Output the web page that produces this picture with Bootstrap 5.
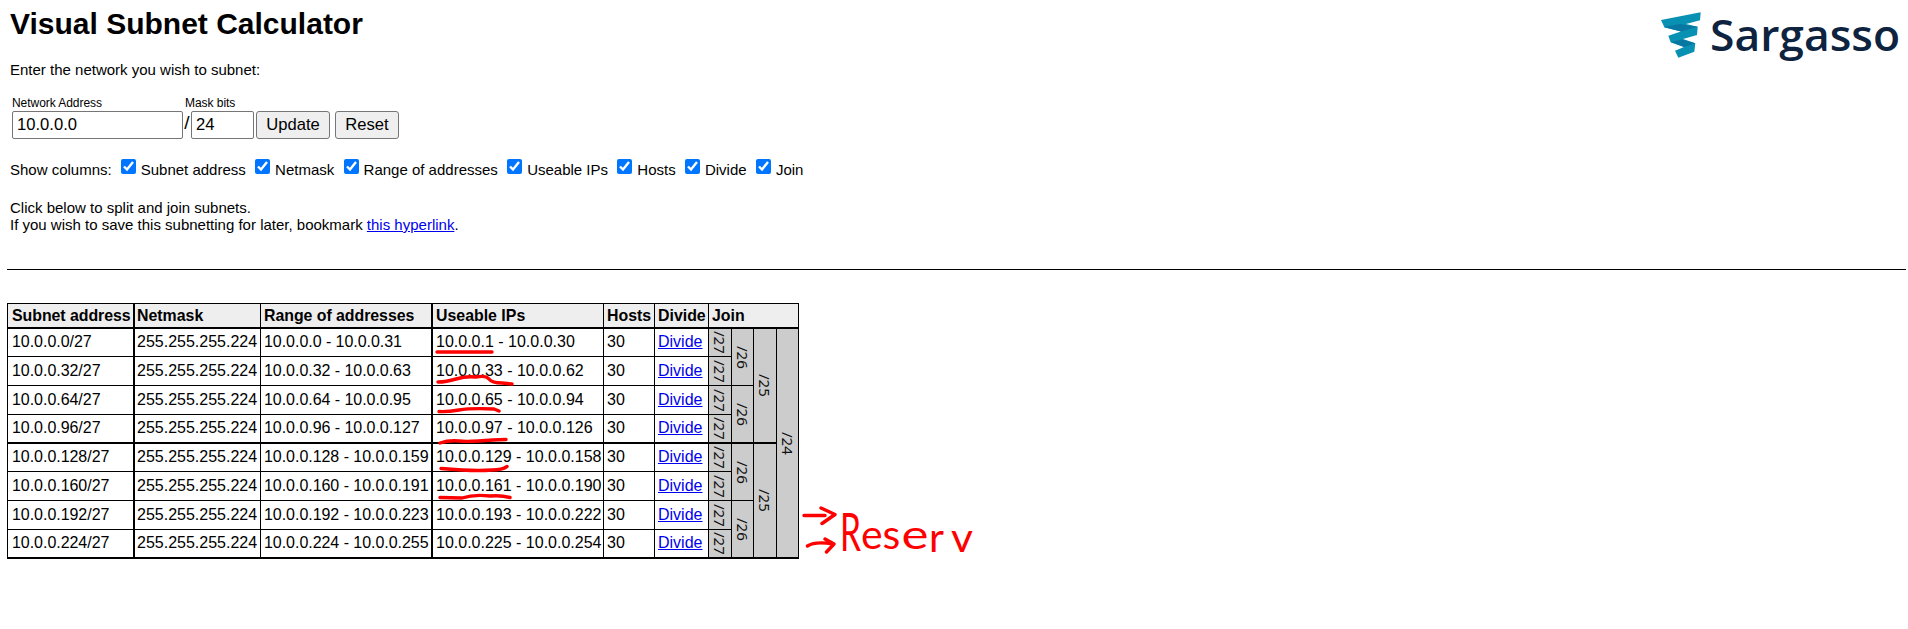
<!DOCTYPE html>
<html lang="en">
<head>
<meta charset="utf-8">
<title>Visual Subnet Calculator</title>
<link href="https://cdn.jsdelivr.net/npm/bootstrap@5.3.0/dist/css/bootstrap.min.css" rel="stylesheet">
<script src="https://cdn.jsdelivr.net/npm/bootstrap@5.3.0/dist/js/bootstrap.bundle.min.js"></script>
<style>
body{font-family:"Liberation Sans",Arial,sans-serif;font-size:15px;line-height:17px;color:#000;background:#fff;height:629px;overflow:hidden}
a{color:#00e}
.intro{padding:7px 7px 0 10px;height:269px}
h1{font-size:30px;font-weight:700;line-height:34px;margin:0 0 20px;white-space:nowrap}
.field-cap{font-size:12px;line-height:14px;height:15px;letter-spacing:-.05px}
.mask-cap{margin-left:2px;width:69px}
.addr,.bits,.tool-btn{height:28px;border:1px solid #767676;border-radius:2px;font-size:16.6px;line-height:20px;color:#000}
.addr,.bits{background:#fff;padding:0 4px}
.addr{width:171px}.bits{width:63px}
.tool-btn{background:#efefef;padding:0;border-radius:3px}
.update{width:74px;margin-left:2px}
.reset{width:64px;margin-left:5px}
.slash{width:8px;font-size:19px;line-height:24px;text-align:center}
.fields{padding-left:2px;margin-top:18px}
.cols{margin-top:20px;height:18px;white-space:nowrap}
.cols label{margin-right:9.3px}
.cols input{width:15px;height:15px;margin:0 5px 0 0}
.cols span{padding-top:2px}
.show-cap{margin-right:9px}
.hint{margin-top:22px}
.rule{height:1px;background:#000;margin:0 2px 0 7px}
.nets{table-layout:fixed;width:792px;border-collapse:separate;border-spacing:0;border:solid #000;border-width:1px 0 0 1px;margin:33px 0 0 7px;font-size:16px;line-height:20px}
.nets th,.nets td{border:solid #000;border-width:0 1px 1px 0;padding:0 0 1px 3px;white-space:nowrap;vertical-align:middle}
.nets th{background:#eee;border-bottom-width:2px;padding:0 0 0 3px;font-size:15.9px}
.nets tr>:nth-child(1):not(.jn),.nets tr>:nth-child(3):not(.jn){border-right-width:2px}
.nets tr>:nth-child(1){padding-left:4px}
.nets tr>:nth-child(1),.nets tr>:nth-child(3){letter-spacing:-.04px}
.nets tr>:nth-child(2){padding-left:2px}
.nets .thick td,.nets .thick-b{border-bottom-width:2px!important}
.nets td.jn{background:#ccc;padding:0!important;color:#111;font-family:"Noto Sans",sans-serif;font-size:15px;line-height:20px}
.jn div{writing-mode:vertical-rl;margin:auto;width:20px;text-align:center}
.brand{width:242px;height:62px}
.marks{left:0;top:0;pointer-events:none}
</style>
</head>
<body class="position-relative">
<header class="intro d-flex justify-content-between align-items-start">
<div>
<h1>Visual Subnet Calculator</h1>
<div>Enter the network you wish to subnet:</div>
<div class="fields d-flex align-items-end">
<div><div class="field-cap">Network Address</div><input class="addr d-block" value="10.0.0.0"></div>
<div><div class="field-cap mask-cap">Mask bits</div><div class="d-flex"><span class="slash">/</span><input class="bits d-block" value="24"></div></div>
<button class="tool-btn update">Update</button>
<button class="tool-btn reset">Reset</button>
</div>
<div class="cols d-flex"><span class="show-cap">Show columns:</span>
<label class="d-flex"><input type="checkbox" checked><span>Subnet address</span></label>
<label class="d-flex"><input type="checkbox" checked><span>Netmask</span></label>
<label class="d-flex"><input type="checkbox" checked><span>Range of addresses</span></label>
<label class="d-flex"><input type="checkbox" checked><span>Useable IPs</span></label>
<label class="d-flex"><input type="checkbox" checked><span>Hosts</span></label>
<label class="d-flex"><input type="checkbox" checked><span>Divide</span></label>
<label class="d-flex"><input type="checkbox" checked><span>Join</span></label>
</div>
<div class="hint">Click below to split and join subnets.<br>If you wish to save this subnetting for later, bookmark <a href="#">this hyperlink</a>.</div>
</div>
<svg class="brand" viewBox="1659 7 242 62" role="img" aria-label="Sargasso">
<path fill="#0891b2" d="M1661 20 1700.700 12.300 1700 20.300 1686 24 1697.700 26.700 1697 35 1683 39 1695.300 43.300 1694.300 51.700 1678.300 57.700 1675 50.700 1684 47 1670.700 42.300 1668.300 35.700 1681 31.500 1664.500 27.500Z"/>
<path fill="#0878a3" d="M1664 27 1679 24 1697.700 26.700 1681 31.500ZM1670.500 42 1682 39.500 1695.300 43.300 1684 47Z"/>
<text x="1710" y="51" textLength="190" lengthAdjust="spacingAndGlyphs" font-family="Open Sans" font-weight="600" font-size="44" fill="#0d2340">Sargasso</text>
</svg>
</header>
<div class="rule"></div>
<table class="nets">
<colgroup><col style="width:127px"><col style="width:126px"><col style="width:172px"><col style="width:171px"><col style="width:51px"><col style="width:54px"><col style="width:23px"><col style="width:22px"><col style="width:23px"><col style="width:22px"></colgroup>
<thead><tr style="height:25px"><th>Subnet address</th><th>Netmask</th><th>Range of addresses</th><th>Useable IPs</th><th>Hosts</th><th>Divide</th><th colspan="4">Join</th></tr></thead>
<tbody>
<tr style="height:28px"><td>10.0.0.0/27</td><td>255.255.255.224</td><td>10.0.0.0 - 10.0.0.31</td><td>10.0.0.1 - 10.0.0.30</td><td>30</td><td><a href="#">Divide</a></td><td class="jn"><div>/27</div></td><td class="jn" rowspan="2"><div>/26</div></td><td class="jn thick-b" rowspan="4"><div>/25</div></td><td class="jn thick-b" rowspan="8"><div>/24</div></td></tr>
<tr style="height:29px"><td>10.0.0.32/27</td><td>255.255.255.224</td><td>10.0.0.32 - 10.0.0.63</td><td>10.0.0.33 - 10.0.0.62</td><td>30</td><td><a href="#">Divide</a></td><td class="jn"><div>/27</div></td></tr>
<tr style="height:29px"><td>10.0.0.64/27</td><td>255.255.255.224</td><td>10.0.0.64 - 10.0.0.95</td><td>10.0.0.65 - 10.0.0.94</td><td>30</td><td><a href="#">Divide</a></td><td class="jn"><div>/27</div></td><td class="jn thick-b" rowspan="2"><div>/26</div></td></tr>
<tr class="thick" style="height:29px"><td>10.0.0.96/27</td><td>255.255.255.224</td><td>10.0.0.96 - 10.0.0.127</td><td>10.0.0.97 - 10.0.0.126</td><td>30</td><td><a href="#">Divide</a></td><td class="jn"><div>/27</div></td></tr>
<tr style="height:28px"><td>10.0.0.128/27</td><td>255.255.255.224</td><td>10.0.0.128 - 10.0.0.159</td><td>10.0.0.129 - 10.0.0.158</td><td>30</td><td><a href="#">Divide</a></td><td class="jn"><div>/27</div></td><td class="jn" rowspan="2"><div>/26</div></td><td class="jn thick-b" rowspan="4"><div>/25</div></td></tr>
<tr style="height:29px"><td>10.0.0.160/27</td><td>255.255.255.224</td><td>10.0.0.160 - 10.0.0.191</td><td>10.0.0.161 - 10.0.0.190</td><td>30</td><td><a href="#">Divide</a></td><td class="jn"><div>/27</div></td></tr>
<tr style="height:29px"><td>10.0.0.192/27</td><td>255.255.255.224</td><td>10.0.0.192 - 10.0.0.223</td><td>10.0.0.193 - 10.0.0.222</td><td>30</td><td><a href="#">Divide</a></td><td class="jn"><div>/27</div></td><td class="jn thick-b" rowspan="2"><div>/26</div></td></tr>
<tr class="thick" style="height:29px"><td>10.0.0.224/27</td><td>255.255.255.224</td><td>10.0.0.224 - 10.0.0.255</td><td>10.0.0.225 - 10.0.0.254</td><td>30</td><td><a href="#">Divide</a></td><td class="jn"><div>/27</div></td></tr>
</tbody></table>
<!-- pen marks drawn over the table -->
<svg class="marks position-absolute" width="1000" height="629" fill="none" stroke="#f00" stroke-width="3.4" stroke-linecap="round" stroke-linejoin="round">
<path d="M437 352H492M438 382Q446 382 456 379T476 377Q486 375 489 379T502 383L512 384M439 411.500Q447 412 459 410T494 409L499 411M440 443Q449 440 459 441T493 440L506 439.500M441 468.500 462 470Q480 471 492 470 502 470 507 466.500M440 497.500 462 498Q474 494 490 496 501 495 510 497.500"/>
<path d="M804 515.500H825M821 508 835 514.500 822 523.500M807.500 546Q815 541 833 544M825 539 834 544 826.500 552"/>
<text y="551" fill="#f00" stroke="none" font-family="Lato,sans-serif" font-size="41"><tspan x="840" font-size="52" textLength="21" lengthAdjust="spacingAndGlyphs">R</tspan><tspan x="861" dy="-2">e</tspan><tspan x="882.500">s</tspan><tspan x="901.500" textLength="27" lengthAdjust="spacingAndGlyphs">e</tspan><tspan x="929" dy="3">r</tspan><tspan x="951" textLength="22" lengthAdjust="spacingAndGlyphs">v</tspan></text>
</svg>
</body>
</html>
